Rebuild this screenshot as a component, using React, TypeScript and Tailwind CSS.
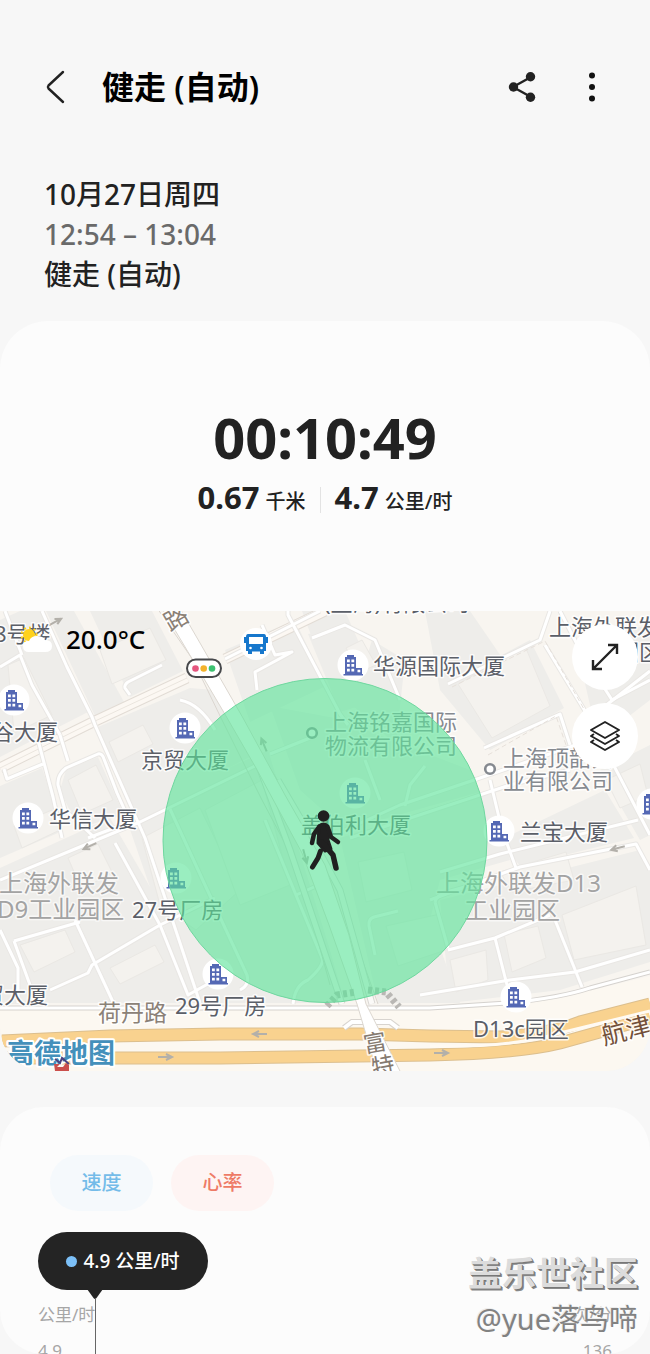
import { useState } from 'react'

interface Label {
  text: string
  x: number
  y: number
  tone?: 'soft' | 'area'
}

const labels: Label[] = [
  { text: '8号楼', x: -6, y: 642 },
  { text: '(上海)有限公司', x: 324, y: 611 },
  { text: '上海外联发', x: 549, y: 635 },
  { text: '园区', x: 617, y: 660 },
  { text: '谷大厦', x: -8, y: 740 },
  { text: '京贸大厦', x: 141, y: 768 },
  { text: '华源国际大厦', x: 373, y: 674 },
  { text: '华信大厦', x: 49, y: 827 },
  { text: '盖伯利大厦', x: 301, y: 833 },
  { text: '兰宝大厦', x: 520, y: 840 },
  { text: '27号厂房', x: 132, y: 918 },
  { text: '29号厂房', x: 175, y: 1014 },
  { text: '贸大厦', x: -18, y: 1003 },
  { text: 'D13c园区', x: 473, y: 1037 },
  { text: '上海铭嘉国际', x: 325, y: 730, tone: 'soft' },
  { text: '物流有限公司', x: 325, y: 754, tone: 'soft' },
  { text: '上海顶韶实', x: 503, y: 766, tone: 'soft' },
  { text: '业有限公司', x: 503, y: 789, tone: 'soft' },
  { text: '上海外联发', x: -1, y: 892, tone: 'area' },
  { text: 'D9工业园区', x: -3, y: 918, tone: 'area' },
  { text: '上海外联发D13', x: 436, y: 892, tone: 'area' },
  { text: '工业园区', x: 464, y: 919, tone: 'area' },
]

const toneClass = {
  normal: 'fill-[#5b5f68] stroke-white/80 text-[22px]',
  soft: 'fill-[#868a90] stroke-white/80 text-[22px]',
  area: 'fill-[#a3a3a3] stroke-white/60 text-[24px]',
}

const buildings = [
  [14, 700], [185, 728], [353, 665], [28, 818], [355, 793], [499, 831],
  [176, 878], [218, 974], [516, 997], [652, 804],
]

// city blocks, drawn a shade darker than the ground
const blocks = [
  'M0 620 20 611H42L88 712 0 757Z',
  'M46 611H74L124 702 95 716Z',
  'M90 611H152L183 671 130 697Z',
  'M98 727 190 688 214 690 244 742 250 757 134 815Z',
  'M66 770 98 757 124 815 78 828 60 790Z',
  'M0 786 42 768 52 798 58 833 0 858Z',
  'M0 868 110 818 168 918 14 996 0 940Z',
  'M125 815 268 750 330 950 345 1003H190Z',
  'M0 925 40 1004H0Z',
  'M20 945 158 925 192 1003H44Z',
  'M225 650 295 620 326 686 250 722Z',
  'M302 611H345L380 690 335 700Z',
  'M308 634 352 628 380 700 340 712Z',
  'M372 640 405 660 396 745 352 705Z',
  'M425 611H470L545 720 490 750 440 690Z',
  'M455 680 530 640 564 708 490 750Z',
  'M575 640 650 625V700L598 740Z',
  'M270 706 335 718 470 770 480 792 345 830 300 790Z',
  'M314 775 345 762 370 768 385 806 330 825Z',
  'M340 838 490 790 510 860 440 880 430 920 460 1003H378Z',
  'M500 840 605 790 634 838 520 866Z',
  'M600 770 650 745V835L640 840Z',
  'M440 900 640 850 650 870V962L560 990 450 1003Z',
]

const roofs = [
  'M8 665 24 658 52 715 14 733Z',
  'M100 650 150 628 166 660 112 684Z',
  'M109 742 143 725 153 744 118 762Z',
  'M68 780 96 765 113 800 82 814Z',
  'M14 826 52 810 60 830 22 848Z',
  'M68 858 98 844 112 872 82 890Z',
  'M20 945 65 930 75 952 34 972Z',
  'M110 968 155 945 164 962 120 984Z',
  'M142 838 200 808 240 890 196 930 160 905Z',
  'M205 810 262 780 290 885 240 905Z',
  'M346 648 362 640 376 665 360 672Z',
  'M458 684 525 646 550 706 492 738Z',
  'M500 872 566 852 574 880 512 892Z',
  'M562 915 636 886 646 945 574 960Z',
  'M450 960 486 950 488 980 456 992Z',
  'M504 934 538 926 546 958 512 972Z',
  'M358 862 404 852 412 890 366 902Z',
  'M386 926 440 914 446 950 398 966Z',
  'M606 780 640 764 648 796 620 808Z',
]

const minorRoads = [
  'M0 667 20 655 32 685 60 735',
  'M5 611 22 655',
  'M42 611 67 667 92 717 95 725 145 838 200 1003',
  'M60 735 68 761',
  'M38 740 53 797 62 838',
  'M4 769 7 779 43 764',
  'M95 838 65 810 58 785Q57 775 66 768L98 754Q102 753 104 759L117 793 130 822 88 838',
  'M130 695 125 688Q124 685 128 682L162 665',
  'M0 880 140 822 220 783 255 766',
  'M14 941 80 922M14 941 30 985M0 930 18 968 18 1003',
  'M50 990 88 973 92 965 160 925 215 898',
  'M75 920 113 1002',
  'M115 843 160 925 188 995 215 980',
  'M180 700Q200 704 215 730',
  'M170 809 205 885 247 975Q250 985 240 990',
  'M265 820 322 958Q325 965 308 980 295 985 293 1004',
  'M296 895 314 887',
  'M262 625 275 655 292 652 255 672 257 690',
  'M288 611V615L340 714 348 725',
  'M225 659 320 611',
  'M312 638 345 625 375 640 400 700',
  'M270 754 310 738',
  'M365 760 380 800',
  'M425 766 410 785 405 806',
  'M345 830 400 805 480 778 590 740',
  'M350 838 510 785 570 770',
  'M490 780 502 830 516 868',
  'M448 684 540 640 550 611',
  'M484 748 560 714 570 745',
  'M545 645 588 716 650 835',
  'M560 611 580 650 612 700 650 680',
  'M600 710 650 671',
  'M440 872 500 854 638 820',
  'M430 900 520 867 636 844 650 870',
  'M435 902Q437 895 447 892L490 880M435 902 448 948',
  'M448 950 495 938 550 915',
  'M495 938 507 985',
  'M555 920 582 987',
  'M420 995 510 980 575 972 650 950',
  'M398 911 374 917Q368 919 369 926L375 955',
]

const riverside = 'M0 1008H430L507 1003Q560 998 590 988L650 972'

function Pin({ x, y }: { x: number; y: number }) {
  return (
    <g transform={`translate(${x} ${y})`}>
      <circle r="15.5" fill="#fff" />
      <path d="M-8 9V-8h2v-2H1v2h2V3h6v6h1v1.600H-9.500V9Z" fill="#5468b4" />
      <path
        d="M-6-5.500h2.800v2.800h-2.800zM-1.600-5.500H1.200v2.800h-2.800zM-6-1h2.800v2.800h-2.800zM-1.600-1H1.200v2.800h-2.800zM-6 3.800h2.800v2.800h-2.800zM-1.600 3.800H1.200v2.800h-2.800zM4.500 4.800H7.300v2.400H4.500z"
        fill="#fff"
      />
    </g>
  )
}

function Arrow({ x, y, angle }: { x: number; y: number; angle: number }) {
  return (
    <path
      transform={`translate(${x} ${y}) rotate(${angle})`}
      d="M-7 0H7M1-3 7 0 1 3"
      fill="none"
      stroke="#b3b0aa"
      strokeWidth="2"
    />
  )
}

function MapCanvas() {
  return (
    <svg viewBox="0 611 650 460" className="block w-full" role="img" aria-label="高德地图">
      <rect y="611" width="650" height="460" fill="#f8f5f0" />
      {blocks.map((d) => (
        <path key={d} d={d} fill="#eeedea" />
      ))}
      {roofs.map((d) => (
        <path key={d} d={d} fill="#f4f2ee" stroke="#eae8e4" strokeWidth="1" />
      ))}
      <path d="M0 1010H430L520 1004Q580 994 650 976V1071H0Z" fill="#fcf8f1" />

      {/* wide side street */}
      <g fill="none">
        <path d="M0 768 93 722 187 678 M225 659 325 611" stroke="#e2dcd5" strokeWidth="11" />
        <path d="M0 768 93 722 187 678 M225 659 325 611" stroke="#fcf8f3" strokeWidth="9" />
        <path d="M0 768 93 722 187 678" stroke="#eae5de" strokeWidth="1" />
      </g>

      <g fill="none" strokeLinejoin="round">
        {minorRoads.map((d) => (
          <path key={d} d={d} stroke="#e9e7e4" strokeWidth="5" />
        ))}
        {minorRoads.map((d) => (
          <path key={d} d={d} stroke="#fff" strokeWidth="3" />
        ))}
        <path d="M452 687 545 641 588 716M488 755 556 716 566 745" stroke="#e6e0da" strokeDasharray="5 3" />
        <path d={riverside} stroke="#d5d2ce" strokeWidth="5" />
        <path d={riverside} stroke="#fff" strokeWidth="3" />
      </g>

      {/* expressway */}
      <g fill="none">
        <path d="M2 1041 110 1036 220 1034H360L430 1036 500 1037Q550 1034 580 1022L650 1004" stroke="#dcbf8e" strokeWidth="13" />
        <path d="M2 1041 110 1036 220 1034H360L430 1036 500 1037Q550 1034 580 1022L650 1004" stroke="#f9d28f" strokeWidth="11" />
        <path d="M0 1058H220L430 1055Q520 1053 560 1043L650 1018" stroke="#dcbf8e" strokeWidth="13" />
        <path d="M0 1058H220L430 1055Q520 1053 560 1043L650 1018" stroke="#f9d28f" strokeWidth="11" />
        <path d="M430 1046Q510 1048 560 1033L650 1011" stroke="#fffaf2" strokeWidth="3" />
        <path d="M344 1028 352 1022H390L398 1028" stroke="#d8d4cf" strokeWidth="6" />
        <path d="M344 1028 352 1022H390L398 1028" stroke="#fff" strokeWidth="4" />
      </g>

      {/* main avenue */}
      <path d="M155 605 193 660 222 720 262 800 298 868 330 985M211 690 241 722 290 800 330 870 378 1004" fill="none" stroke="#dbd6d0" strokeWidth="1" />
      <path d="M253 750 290 850 342 1004M278 780 312 838 340 890 372 1004" fill="none" stroke="#d9d7d4" strokeWidth="7" />
      <path d="M253 750 290 850 342 1004M278 780 312 838 340 890 372 1004" fill="none" stroke="#fbfaf8" strokeWidth="5" />
      <path d="M160 605 178 605 200 643 243 718 285 795 325 865 349 935 366 1004 402 1075H378L357 1004 329 925 302 853 256 768 226 716 200 672Z" fill="#fff" stroke="#dcd7d0" strokeWidth="1" />
      <g fill="none" stroke="#b9b7b4" strokeWidth="7" strokeDasharray="4 3">
        <path d="M327 1006 337 995 356 992" />
        <path d="M368 990 386 992 399 1007" />
      </g>

      <Arrow x={55} y={622} angle={-28} />
      <Arrow x={90} y={846} angle={155} />
      <Arrow x={264} y={745} angle={-112} />
      <Arrow x={305} y={856} angle={75} />
      <Arrow x={618} y={848} angle={165} />
      <Arrow x={260} y={1034} angle={180} />
      <Arrow x={165} y={1057} angle={0} />
      <Arrow x={441} y={1053} angle={0} />

      {buildings.map(([x, y]) => (
        <Pin key={`${x}-${y}`} x={x} y={y} />
      ))}
      <circle cx="312" cy="733" r="4.800" fill="#fff" stroke="#85898f" strokeWidth="2.600" />
      <circle cx="490" cy="769" r="4.800" fill="#fff" stroke="#85898f" strokeWidth="2.600" />

      <g strokeWidth="3" strokeLinejoin="round" style={{ paintOrder: 'stroke' }}>
        {labels.map((l) => (
          <text key={`${l.text}-${l.y}`} x={l.x} y={l.y} className={toneClass[l.tone ?? 'normal']}>
            {l.text}
          </text>
        ))}
        <text x="98" y="1021" className="fill-[#8b8177] stroke-white/80 text-[23px]">荷丹路</text>
        <text transform="translate(170 632) rotate(-30)" className="fill-[#8b8177] stroke-white/80 text-[24px]">路</text>
        <text transform="translate(604 1045) rotate(-14)" className="fill-[#73503a] stroke-white/80 text-[25px]">航津</text>
        <text transform="translate(365 1053) rotate(-10)" className="fill-[#857a70] stroke-white/80 text-[23px]">富</text>
        <text transform="translate(373 1076) rotate(-10)" className="fill-[#857a70] stroke-white/80 text-[23px]">特</text>
      </g>

      {/* bus stop */}
      <circle cx="256" cy="644" r="16" fill="#fff" />
      <path d="M248 634H264Q266 634 266 637H268V643H266V651H264V654H260V651.500H252V654H248V651H246V643H244V637H246Q246 634 248 634Z" fill="#1677cc" />
      <path d="M249 637H263V644H249Z" fill="#fff" />
      <circle cx="250.500" cy="648" r="1.300" fill="#fff" />
      <circle cx="261.500" cy="648" r="1.300" fill="#fff" />

      {/* traffic light */}
      <rect x="187" y="659.500" width="34" height="17.500" rx="8.700" fill="#fff" stroke="#47484b" strokeWidth="2" />
      <circle cx="195.500" cy="668.500" r="3.300" fill="#e5567f" />
      <circle cx="203.700" cy="668.500" r="3.300" fill="#f3b22c" />
      <circle cx="212" cy="668.500" r="3.300" fill="#3cc170" />

      <text
        x="7"
        y="1063"
        strokeWidth="4"
        strokeLinejoin="round"
        style={{ paintOrder: 'stroke' }}
        className="fill-[#4490bb] stroke-white text-[27px] font-bold"
      >
        高德地图
      </text>

      {/* landmark by the expressway */}
      <path d="M54 1064H60L57 1067H63L66 1063 69 1065V1071H55Z" fill="#cb4f4c" />
      <path d="M55 1059 60 1063 62 1058 69 1064" fill="none" stroke="#4c4382" strokeWidth="2" />

      {/* location accuracy */}
      <circle cx="325" cy="840.500" r="162" fill="#5ce49a" fillOpacity=".62" stroke="#6fd79f" strokeWidth="1" />

      {/* walker */}
      <g fill="none" stroke="#202020" strokeLinecap="round" strokeLinejoin="round">
        <circle cx="323.500" cy="816" r="5.800" fill="#202020" stroke="none" />
        <path d="M319 826Q324 822 328 826L328 840 331 849 325 851 318 843Z" fill="#202020" strokeWidth="3" />
        <path d="M319 827 314 834 312 843" strokeWidth="4.500" />
        <path d="M328 828 331 837 338 842" strokeWidth="4.500" />
        <path d="M322 842 333 855 336 868" strokeWidth="5.500" />
        <path d="M320.500 851 318 858 312.500 867" strokeWidth="5" />
      </g>

      {/* weather */}
      <circle cx="29" cy="635" r="6" fill="#ffd21c" />
      <circle cx="29" cy="635" r="7.500" fill="none" stroke="#ffd21c" strokeWidth="2" strokeDasharray="2 3" />
      <path d="M29 652Q23 652 23 646 23 641 29 641 31 636 37 636 43 636 45 640 52 640 52 646 52 652 45 652Z" fill="#fff" />
    </svg>
  )
}

export default function App() {
  const [metric, setMetric] = useState<'speed' | 'heart'>('speed')

  return (
    <div className="h-screen flex flex-col overflow-hidden relative bg-[#f7f7f7] text-[#222] font-['Noto_Sans','Noto_Sans_CJK_SC',sans-serif]">
      <header className="shrink-0 flex items-center pt-[63px] pl-11 pr-[50px]">
        <button type="button" aria-label="返回" className="w-6 h-12 flex items-center">
          <svg viewBox="0 0 24 36" className="w-6 h-9" fill="none" stroke="#222" strokeWidth="2.400" strokeLinecap="round" strokeLinejoin="round">
            <path d="M19 3 4.500 16.500Q3.300 18 4.500 19.500L19 33" />
          </svg>
        </button>
        <h1 className="flex-1 ml-[34px] text-[32px] leading-[48px] font-semibold text-black">健走 (自动)</h1>
        <button type="button" aria-label="分享" className="w-8 h-12 flex items-center justify-center">
          <svg viewBox="0 0 32 32" className="w-8 h-8" fill="#222">
            <path d="M25 6 7 16 25 26" fill="none" stroke="#222" strokeWidth="2.400" />
            <circle cx="7.500" cy="16" r="4.700" />
            <circle cx="24.500" cy="5.800" r="4.700" />
            <circle cx="24.500" cy="26.200" r="4.700" />
          </svg>
        </button>
        <button type="button" aria-label="更多选项" className="w-8 h-12 ml-[38px] -mr-2 flex items-center justify-center">
          <svg viewBox="0 0 32 32" className="w-8 h-8" fill="#111">
            <circle cx="16" cy="4.500" r="3" />
            <circle cx="16" cy="16" r="3" />
            <circle cx="16" cy="27.500" r="3" />
          </svg>
        </button>
      </header>

      <div className="shrink-0 mt-[63px] pl-11 text-[28px] leading-10 font-medium">
        <p>10月27日周四</p>
        <p className="text-[#6a6a6a]">12:54 – 13:04</p>
        <p>健走 (自动)</p>
      </div>

      <section className="shrink-0 mt-[27px] pt-[88px] pb-[88px] rounded-t-[48px] bg-[#fcfcfc] text-center">
        <p className="text-[56px] leading-[56px] font-bold">00:10:49</p>
        <div className="mt-3 flex justify-center items-center leading-10">
          <p>
            <span className="text-[31px] font-bold">0.67</span>
            <span className="ml-[6px] text-[20px] font-medium">千米</span>
          </p>
          <div className="mx-[14px] w-px h-[26px] bg-[#e3e3e3]" />
          <p>
            <span className="text-[31px] font-bold">4.7</span>
            <span className="ml-[6px] text-[20px] font-medium">公里/时</span>
          </p>
        </div>
      </section>

      <section className="shrink-0 relative overflow-hidden rounded-b-[44px]">
        <MapCanvas />
        <p className="absolute left-[66px] top-2 text-[26px] leading-10 font-medium text-black">20.0°C</p>
        <div className="absolute right-3 top-[13px] flex flex-col gap-[13px]">
          <button type="button" aria-label="全屏" className="size-[66px] rounded-full bg-white flex items-center justify-center">
            <svg viewBox="0 0 32 32" className="size-8" fill="none" stroke="#222" strokeWidth="2.400">
              <path d="M4 28 28 4M19 4H28V13M4 19V28H13" />
            </svg>
          </button>
          <button type="button" aria-label="图层" className="size-[66px] rounded-full bg-white flex items-center justify-center">
            <svg viewBox="0 0 32 32" className="size-8" fill="none" stroke="#222" strokeWidth="2" strokeLinejoin="round">
              <path d="M16 2 30 10 16 18 2 10Z" />
              <path d="M5 14 2 16 16 24 30 16 27 14" />
              <path d="M5 20 2 22 16 30 30 22 27 20" />
            </svg>
          </button>
        </div>
      </section>

      <section className="flex-1 min-h-0 mt-9 pt-12 overflow-hidden rounded-[44px] bg-[#fcfcfc]">
        <div className="flex gap-[18px] pl-[50px] text-[20px] font-medium">
          <button
            type="button"
            aria-pressed={metric === 'speed'}
            onClick={() => setMetric('speed')}
            className="w-[103px] h-14 rounded-full bg-[#f5f9fc] text-[#74bce9]"
          >
            速度
          </button>
          <button
            type="button"
            aria-pressed={metric === 'heart'}
            onClick={() => setMetric('heart')}
            className="w-[103px] h-14 rounded-full bg-[#fef4f3] text-[#ee7b66]"
          >
            心率
          </button>
        </div>

        <div className="relative mt-[21px] px-[38px]">
          <div className="w-[170px] h-[58px] rounded-full bg-[#242424] text-white flex items-center justify-center gap-[6px] text-[19px] font-medium">
            <span className="size-[11px] rounded-full bg-[#7cc0f8]" />
            4.9 公里/时
          </div>
          <svg viewBox="0 0 16 80" className="absolute left-[87px] top-[57px] w-4 h-20">
            <path d="M0 0H16L9.500 9Q8 11 6.500 9Z" fill="#242424" />
            <path d="M8.500 9V80" stroke="#666" strokeWidth="1" />
          </svg>
          <div className="mt-[7px] flex justify-between text-[17px] leading-9 text-[#a6a6a6]">
            <div>
              <p>公里/时</p>
              <p>4.9</p>
            </div>
            <div className="text-right">
              <p>次/分</p>
              <p>136</p>
            </div>
          </div>
        </div>
      </section>

      <div className="absolute right-3 bottom-3 text-right">
        <p className="text-[34px] leading-[46px] font-bold text-[#dcdcdc] [text-shadow:1px_1px_0_#777,2px_2px_0_#8a8a8a]">盖乐世社区</p>
        <p className="text-[29px] leading-[46px] text-[#828282] [text-shadow:-1px_-1px_0_#ececec]">@yue落鸟啼</p>
      </div>
    </div>
  )
}
